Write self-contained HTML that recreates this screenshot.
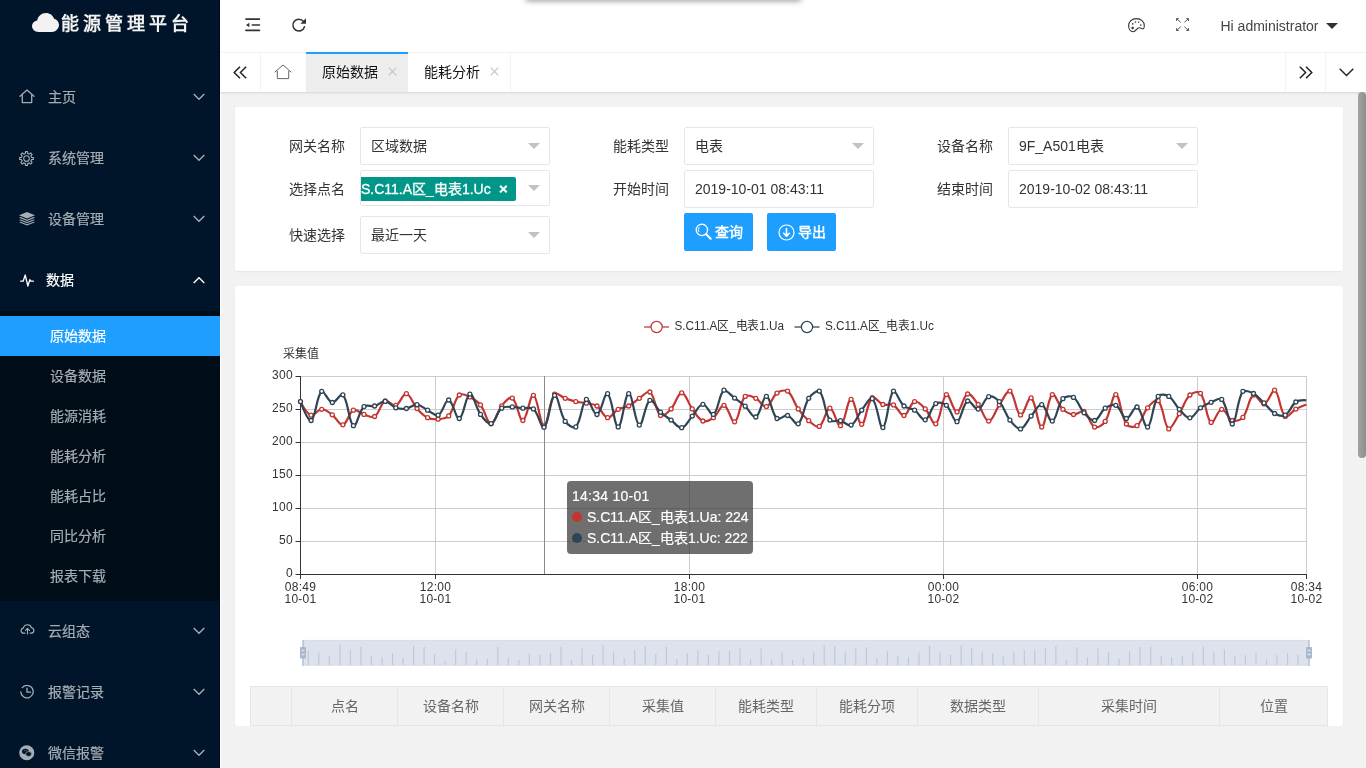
<!DOCTYPE html>
<html lang="zh-CN">
<head>
<meta charset="utf-8">
<title>能源管理平台</title>
<style>
*{box-sizing:border-box;margin:0;padding:0}
html,body{width:1366px;height:768px;overflow:hidden;background:#f2f2f2;font-family:"Liberation Sans",sans-serif;font-size:14px;color:#333}
#root{position:absolute;left:0;top:0;width:1366px;height:768px;overflow:hidden;will-change:transform}
.abs{position:absolute}
svg{display:block}
/* sidebar */
#side{position:absolute;left:0;top:0;width:220px;height:768px;background:#001529;overflow:hidden;z-index:5;box-shadow:inset -1px 0 0 rgba(0,0,20,.45)}
#logo{position:absolute;left:0;top:0;width:220px;height:50px}
#logo svg{position:absolute;left:32px;top:13px}
#logo span{position:absolute;left:61px;top:11px;line-height:26px;font-size:18px;font-weight:bold;letter-spacing:4px;color:#f2f2f2;white-space:nowrap}
.mi{position:absolute;left:0;width:220px;height:61px;color:#a6adb4}
.mi svg.ic{position:absolute;left:19px;top:23px}
.mi .t{position:absolute;left:48px;top:21px;line-height:21px;font-size:14px;white-space:nowrap;-webkit-text-stroke:.2px currentColor}
.mi svg.ar{position:absolute;left:193px;top:27px}
.mi.open{color:#fff}
#sub{position:absolute;left:0;top:311px;width:220px;height:290px;background:#000c17}
.si{position:absolute;left:0;width:220px;height:40px;line-height:40px;padding-left:50px;font-size:14px;color:#a6adb4;white-space:nowrap;-webkit-text-stroke:.2px currentColor}
.si.on{background:#1e9fff;color:#fff}
/* header */
#hd{position:absolute;left:220px;top:0;width:1146px;height:52px;background:#fff}
#hdline{position:absolute;left:220px;top:52px;width:1146px;height:1px;background:#f3f3f3;z-index:3}
#tabs{position:absolute;left:220px;top:52px;width:1146px;height:40px;background:#fff;box-shadow:0 1px 2px 0 rgba(0,0,0,.12);z-index:2}
.tb{position:absolute;top:0;height:40px;line-height:40px;font-size:14px;color:#111;white-space:nowrap}
.vl{position:absolute;top:0;width:1px;height:40px;background:#f3f3f3}
#user{position:absolute;left:1000.5px;top:15px;line-height:22px;font-size:14px;color:#444;white-space:nowrap}
/* body */
.card{position:absolute;left:235px;width:1108px;background:#fff;border-radius:2px;box-shadow:0 1px 2px 0 rgba(0,0,0,.05)}
.lb{position:absolute;width:80px;text-align:right;line-height:20px;font-size:14px;color:#333;white-space:nowrap}
.inp{position:absolute;width:190px;height:38px;border:1px solid #e6e6e6;border-radius:2px;background:#fff;padding-left:10px;line-height:36px;font-size:14px;color:#333;white-space:nowrap;overflow:hidden}
.inp i{position:absolute;right:9px;top:15px;width:0;height:0;border:6px solid transparent;border-top-color:#c2c2c2;border-bottom-width:0}
.btn{position:absolute;top:213px;width:69px;height:38px;background:#1e9fff;border-radius:2px;color:#fff;font-size:14px;line-height:38px;white-space:nowrap}
.btn svg{position:absolute;top:10px}
.btn span{position:absolute;top:0;-webkit-text-stroke:.45px #fff}
.th{position:absolute;top:0;height:38px;line-height:38px;text-align:center;font-size:14px;color:#666;border-right:1px solid #e6e6e6;white-space:nowrap}
</style>
</head>
<body>
<div id="root">
<div id="side">
  <div id="logo">
    <svg width="27" height="19" viewBox="0 0 27 20" preserveAspectRatio="none"><path fill="#f2f2f2" d="M6.6 20C2.9 20 0 17.2 0 13.8c0-3 2.2-5.5 5.2-6C5.9 3.4 9.5 0 14 0c3.8 0 7 2.5 8.100 6 2.800.7 4.900 3.300 4.900 6.400 0 4.200-3.200 7.600-7.200 7.600z"/></svg>
    <span>能源管理平台</span>
  </div>

  <div class="mi" style="top:66px">
    <svg class="ic" width="16" height="15" viewBox="0 0 16 15" fill="none" stroke="currentColor" stroke-width="1.3" stroke-linejoin="round" stroke-linecap="round"><path d="M1 7.200 8 1l7 6.200"/><path d="M3.300 6.500V13.600h9.400V6.500"/></svg>
    <span class="t">主页</span>
    <svg class="ar" width="12" height="8" viewBox="0 0 12 8" fill="none" stroke="currentColor" stroke-width="1.4"><path d="M.7 1 6 6.300 11.300 1"/></svg>
  </div>

  <div class="mi" style="top:127px">
    <svg class="ic" style="top:24px" width="15" height="15" viewBox="0 0 16 16" fill="none" stroke="currentColor" stroke-width="1.200" stroke-linejoin="round"><path d="M6.76 2.64L6.91 0.68L9.09 0.68L9.24 2.64L10.91 3.34L12.40 2.05L13.95 3.60L12.66 5.09L13.36 6.76L15.32 6.91L15.32 9.09L13.36 9.24L12.66 10.91L13.95 12.40L12.40 13.95L10.91 12.66L9.24 13.36L9.09 15.32L6.91 15.32L6.76 13.36L5.09 12.66L3.60 13.95L2.05 12.40L3.34 10.91L2.64 9.24L0.68 9.09L0.68 6.91L2.64 6.76L3.34 5.09L2.05 3.60L3.60 2.05L5.09 3.34z"/><circle cx="8" cy="8" r="3"/></svg>
    <span class="t">系统管理</span>
    <svg class="ar" width="12" height="8" viewBox="0 0 12 8" fill="none" stroke="currentColor" stroke-width="1.4"><path d="M.7 1 6 6.300 11.300 1"/></svg>
  </div>

  <div class="mi" style="top:188px">
    <svg class="ic" style="top:24px" width="16" height="13.500" viewBox="0 0 16 15" preserveAspectRatio="none" fill="currentColor"><path d="M8 0 16 3.600 8 7.200 0 3.600z"/><path d="M1.600 5.600 0 6.300l8 3.600 8-3.600-1.600-.7L8 8.500z"/><path d="M1.600 8.200 0 8.900l8 3.600 8-3.600-1.600-.7L8 11.100z"/><path d="M1.600 10.800 0 11.500l8 3.500 8-3.500-1.600-.7L8 13.700z"/></svg>
    <span class="t">设备管理</span>
    <svg class="ar" width="12" height="8" viewBox="0 0 12 8" fill="none" stroke="currentColor" stroke-width="1.4"><path d="M.7 1 6 6.300 11.300 1"/></svg>
  </div>

  <div class="mi open" style="top:249px">
    <svg class="ic" style="left:20px;top:25px" width="14" height="13" viewBox="0 0 14 13" fill="none" stroke="currentColor" stroke-width="1.300" stroke-linejoin="round" stroke-linecap="round"><path d="M.6 7.200H3.200L5.200 1l2.700 11 1.900-6.300 1 1.500h2.600"/></svg>
    <span class="t" style="left:46px">数据</span>
    <svg class="ar" width="12" height="8" viewBox="0 0 12 8" fill="none" stroke="currentColor" stroke-width="1.4"><path d="M.7 7 6 1.700 11.300 7"/></svg>
  </div>

  <div id="sub">
    <div class="si on" style="top:5px">原始数据</div>
    <div class="si" style="top:45px">设备数据</div>
    <div class="si" style="top:85px">能源消耗</div>
    <div class="si" style="top:125px">能耗分析</div>
    <div class="si" style="top:165px">能耗占比</div>
    <div class="si" style="top:205px">同比分析</div>
    <div class="si" style="top:245px">报表下载</div>
  </div>

  <div class="mi" style="top:600px">
    <svg class="ic" style="left:19.500px;top:24px" width="15" height="10.500" viewBox="0 0 16 12" fill="none" stroke="currentColor" stroke-width="1.300" stroke-linecap="round" stroke-linejoin="round"><path d="M5 10.500H3.800C2 10.500.7 9.200.7 7.600c0-1.500 1.100-2.700 2.600-2.900C3.700 2.500 5.600.8 8 .8c2.200 0 4 1.500 4.500 3.500 1.600.2 2.800 1.500 2.800 3.100 0 1.700-1.400 3.100-3.100 3.100H11"/><path d="M8 11.300V5.200M5.700 7.300 8 5l2.300 2.300"/></svg>
    <span class="t">云组态</span>
    <svg class="ar" width="12" height="8" viewBox="0 0 12 8" fill="none" stroke="currentColor" stroke-width="1.4"><path d="M.7 1 6 6.300 11.300 1"/></svg>
  </div>

  <div class="mi" style="top:661px">
    <svg class="ic" style="left:20px;top:24px" width="14" height="14" viewBox="0 0 14 14" fill="none" stroke="currentColor" stroke-width="1.300" stroke-linecap="round" stroke-linejoin="round"><path d="M2.300 2.600A6.200 6.200 0 1 1 .8 7"/><path d="M7 3.200V7.200H10.600"/></svg>
    <span class="t">报警记录</span>
    <svg class="ar" width="12" height="8" viewBox="0 0 12 8" fill="none" stroke="currentColor" stroke-width="1.4"><path d="M.7 1 6 6.300 11.300 1"/></svg>
  </div>

  <div class="mi" style="top:722px">
    <svg class="ic" style="top:23px" width="15.500" height="15.500" viewBox="0 0 16 16"><circle cx="8" cy="8" r="7.800" fill="currentColor"/><ellipse cx="6.600" cy="6.700" rx="3.500" ry="2.800" fill="#001529"/><ellipse cx="9.900" cy="9.300" rx="3.100" ry="2.500" fill="#001529" stroke="#a6adb4" stroke-width=".7"/><circle cx="5.500" cy="6" r=".5" fill="#a6adb4"/><circle cx="7.800" cy="6" r=".5" fill="#a6adb4"/></svg>
    <span class="t">微信报警</span>
    <svg class="ar" width="12" height="8" viewBox="0 0 12 8" fill="none" stroke="currentColor" stroke-width="1.4"><path d="M.7 1 6 6.300 11.300 1"/></svg>
  </div>
</div>
<div id="hd">
  <!-- fold icon -->
  <svg class="abs" style="left:25px;top:18px" width="16" height="14" viewBox="0 0 16 14"><g fill="none" stroke="#333" stroke-width="1.600" stroke-linecap="round"><path d="M.9 1.100H14.500M7.300 7H14.500M.9 12.400H14.500"/></g><path d="M1 7 4.400 4.800v4.400z" fill="#333"/></svg>
  <!-- refresh icon -->
  <svg class="abs" style="left:71px;top:17px" width="16" height="16" viewBox="0 0 16 16"><path d="M12.500 4.500A5.900 5.900 0 1 0 13.470 9.680" fill="none" stroke="#333" stroke-width="1.500" stroke-linecap="round"/><path d="M15 1.200V6.800H9.400z" fill="#333"/></svg>
  <!-- palette icon -->
  <svg class="abs" style="left:908px;top:18px" width="17" height="15" viewBox="0 0 17 15"><path d="M.6 7.800C.6 3.500 4 .6 8.400.6 12.800.6 16.300 3.600 16.300 7.400c0 1.400 0 3-.9 3.400-1.200.5-2.400-1.200-4.100-1.100-2.500.2-3.500 4-6.100 4C2.400 13.700.6 11 .6 7.800z" fill="none" stroke="#333" stroke-width="1.100"/><g fill="#333"><circle cx="7.500" cy="4" r=".8"/><circle cx="10.700" cy="4.300" r=".7"/><circle cx="4.800" cy="5.900" r=".8"/><circle cx="12.800" cy="7.100" r=".8"/><circle cx="4.600" cy="9.900" r="1.250"/></g></svg>
  <!-- fullscreen icon -->
  <svg class="abs" style="left:955.500px;top:18px" width="13.200" height="13" viewBox="0 0 14 13" preserveAspectRatio="none" fill="none" stroke="#555" stroke-width="1"><path d="M.6 3V.6H3M.6.600 5 4.400M10.900.6H13.300V3M13.300.600 8.900 4.400M.6 10.100V12.500H3M.6 12.500 5 8.700M10.900 12.500H13.300V10.100M13.300 12.500 8.900 8.700"/></svg>
  <span id="user">Hi administrator</span>
  <svg class="abs" style="left:1106px;top:23px" width="12" height="6" viewBox="0 0 12 6"><path d="M0 0H12L6 6z" fill="#333"/></svg>
</div>
<div id="tabs">
  <div class="abs" style="left:0;top:0;width:1146px;height:1px;background:#f3f3f3"></div>
  <!-- prev -->
  <svg class="abs" style="left:13px;top:14px" width="14" height="13" viewBox="0 0 14 13" fill="none" stroke="#222" stroke-width="1.500"><path d="M7 .7 1.200 6.500 7 12.300M13.200.7 7.400 6.500l5.800 5.800"/></svg>
  <div class="vl" style="left:40px"></div>
  <!-- home -->
  <svg class="abs" style="left:54px;top:12px" width="18" height="16" viewBox="0 0 18 16" fill="none" stroke="#666" stroke-width="1" stroke-linejoin="round" stroke-linecap="round"><path d="M1 8 9 1l8 7"/><path d="M3.300 7.200V14.600H14.700V7.200"/></svg>
  <div class="abs" style="left:86px;top:0;width:102px;height:40px;background:#eee;border-top:2px solid #1e9fff"></div>
  <div class="tb" style="left:102px">原始数据</div>
  <svg class="abs" style="left:168px;top:15px" width="9" height="9" viewBox="0 0 9 9" stroke="#c2c2c2" stroke-width="1.100"><path d="M.7.7 8.300 8.300M8.300.7.700 8.300"/></svg>
  <div class="tb" style="left:204px">能耗分析</div>
  <svg class="abs" style="left:270px;top:15px" width="9" height="9" viewBox="0 0 9 9" stroke="#c2c2c2" stroke-width="1.100"><path d="M.7.7 8.300 8.300M8.300.7.700 8.300"/></svg>
  <div class="vl" style="left:290px"></div>
  <div class="vl" style="left:1065px"></div>
  <!-- next -->
  <svg class="abs" style="left:1079px;top:14px" width="14" height="13" viewBox="0 0 14 13" fill="none" stroke="#222" stroke-width="1.500"><path d="M.8.700 6.600 6.500.8 12.300M7 .7l5.800 5.800L7 12.300"/></svg>
  <div class="vl" style="left:1105px"></div>
  <!-- down -->
  <svg class="abs" style="left:1119px;top:16px" width="15" height="9" viewBox="0 0 15 9" fill="none" stroke="#222" stroke-width="1.400"><path d="M.7.7 7.500 7.500 14.300.7"/></svg>
</div>
<div class="card" style="top:107px;height:164px"></div>
<div class="lb" style="left:265px;top:136px">网关名称</div>
<div class="inp" style="left:360px;top:127px">区域数据<i></i></div>
<div class="lb" style="left:589px;top:136px">能耗类型</div>
<div class="inp" style="left:684px;top:127px">电表<i></i></div>
<div class="lb" style="left:913px;top:136px">设备名称</div>
<div class="inp" style="left:1008px;top:127px">9F_A501电表<i></i></div>

<div class="lb" style="left:265px;top:179px">选择点名</div>
<div class="inp" style="left:360px;top:170px;height:36px;padding:0"><div class="abs" style="left:-22px;top:6px;width:177px;height:24px;background:#009688;border-radius:2px;color:#fff;line-height:24px;font-size:14px;padding-left:22px;-webkit-text-stroke:.3px #fff">S.C11.A区_电表1.Uc<b style="position:absolute;left:160px;top:0;font-size:15px;font-weight:bold">×</b></div><i style="top:14px"></i></div>
<div class="lb" style="left:589px;top:179px">开始时间</div>
<div class="inp" style="left:684px;top:170px">2019-10-01 08:43:11</div>
<div class="lb" style="left:913px;top:179px">结束时间</div>
<div class="inp" style="left:1008px;top:170px">2019-10-02 08:43:11</div>

<div class="lb" style="left:265px;top:225px">快速选择</div>
<div class="inp" style="left:360px;top:216px">最近一天<i></i></div>

<div class="btn" style="left:684px">
  <svg style="left:10.500px" width="17" height="17" viewBox="0 0 18 18" fill="none" stroke="#fff" stroke-width="1.400" stroke-linecap="round"><circle cx="7.300" cy="7.300" r="6"/><path d="M11.800 11.800 16.600 16.600" stroke-width="2.200"/><path d="M4 9.300A3.800 3.800 0 0 1 4.300 4.800" stroke-width="1"/></svg>
  <span style="left:31px">查询</span>
</div>
<div class="btn" style="left:767px">
  <svg style="left:10.500px;top:10.500px" width="17" height="17" viewBox="0 0 17 17" fill="none" stroke="#fff" stroke-width="1.200" stroke-linecap="round" stroke-linejoin="round"><circle cx="8.500" cy="8.500" r="7.500"/><path d="M8.500 4.600V12M5.700 9.300 8.500 12.100l2.800-2.800" stroke-width="1.600"/></svg>
  <span style="left:31px">导出</span>
</div>
<div class="card" style="top:286px;height:440px"></div>
<svg class="abs" style="left:235px;top:286px" width="1108" height="440" viewBox="235 286 1108 440" font-family="Liberation Sans, sans-serif">
<path d="M301 376.5H1306.500M301 409.5H1306.500M301 442.5H1306.500M301 475.5H1306.500M301 508.5H1306.500M301 541.5H1306.500M435.5 376V574M689.5 376V574M943.5 376V574M1197.5 376V574M1306.5 376V574" stroke="#ccc" stroke-width="1" fill="none"/>
<path d="M544.500 376V574" stroke="#8a8a8a" stroke-width="1"/>
<path d="M300.500 376V575M296 574.500H1307M295.500 376.5H301M295.500 409.5H301M295.500 442.5H301M295.500 475.5H301M295.500 508.5H301M295.500 541.5H301M295.500 574.5H301M300.5 574V579M435.5 574V579M689.5 574V579M943.5 574V579M1197.5 574V579M1306.5 574V579" stroke="#333" stroke-width="1" fill="none"/>
<g font-size="12" fill="#333">
<text x="301" y="358" text-anchor="middle">采集值</text>
<text x="293" y="378.5" text-anchor="end" letter-spacing=".3">300</text>
<text x="293" y="411.5" text-anchor="end" letter-spacing=".3">250</text>
<text x="293" y="444.5" text-anchor="end" letter-spacing=".3">200</text>
<text x="293" y="477.5" text-anchor="end" letter-spacing=".3">150</text>
<text x="293" y="510.5" text-anchor="end" letter-spacing=".3">100</text>
<text x="293" y="543.5" text-anchor="end" letter-spacing=".3">50</text>
<text x="293" y="576.5" text-anchor="end" letter-spacing=".3">0</text>
<text x="300.5" y="591.300" text-anchor="middle" letter-spacing=".25">08:49</text><text x="300.5" y="603.300" letter-spacing=".25" text-anchor="middle">10-01</text>
<text x="435.5" y="591.300" text-anchor="middle" letter-spacing=".25">12:00</text><text x="435.5" y="603.300" letter-spacing=".25" text-anchor="middle">10-01</text>
<text x="689.5" y="591.300" text-anchor="middle" letter-spacing=".25">18:00</text><text x="689.5" y="603.300" letter-spacing=".25" text-anchor="middle">10-01</text>
<text x="943.5" y="591.300" text-anchor="middle" letter-spacing=".25">00:00</text><text x="943.5" y="603.300" letter-spacing=".25" text-anchor="middle">10-02</text>
<text x="1197.5" y="591.300" text-anchor="middle" letter-spacing=".25">06:00</text><text x="1197.5" y="603.300" letter-spacing=".25" text-anchor="middle">10-02</text>
<text x="1306.5" y="591.300" text-anchor="middle" letter-spacing=".25">08:34</text><text x="1306.5" y="603.300" letter-spacing=".25" text-anchor="middle">10-02</text>
<text x="674.500" y="330" textLength="109.500" lengthAdjust="spacingAndGlyphs">S.C11.A区_电表1.Ua</text><text x="825" y="330" textLength="109" lengthAdjust="spacingAndGlyphs">S.C11.A区_电表1.Uc</text>
</g>
<g fill="#fff" stroke-width="1.250"><path d="M644 327H669" stroke="#c23531"/><circle cx="656.600" cy="327" r="5.600" stroke="#c23531"/><path d="M794.500 327H819.500" stroke="#2f4554"/><circle cx="807" cy="327" r="5.600" stroke="#2f4554"/></g>
<path d="M300.50 401.63C300.50 401.63 306.37 413.49 311.09 415.20C314.42 416.40 317.62 409.34 321.68 409.27C325.67 409.19 328.64 412.14 332.27 414.80C336.69 418.05 339.26 425.60 342.85 424.82C347.31 423.85 348.51 412.62 353.44 410.19C356.56 408.66 359.90 413.17 364.03 414.41C367.95 415.58 371.68 418.38 374.62 416.52C379.73 413.27 380.20 403.61 385.21 400.97C388.25 399.36 392.40 406.48 395.80 405.31C400.45 403.72 402.65 393.16 406.38 393.72C410.70 394.36 412.43 403.34 416.97 408.48C420.48 412.45 422.99 415.40 427.56 417.70C431.04 419.45 434.20 419.49 438.15 419.15C442.25 418.79 446.15 418.81 448.74 415.86C454.19 409.64 453.82 399.97 459.33 395.04C461.86 392.76 466.32 395.20 469.91 396.88C474.36 398.96 477.44 401.03 480.50 404.92C485.49 411.24 486.99 423.58 491.09 423.76C495.04 423.93 496.75 411.83 501.68 405.84C504.79 402.06 509.48 396.14 512.27 398.07C517.53 401.70 519.03 420.97 522.86 420.47C527.08 419.92 529.77 394.34 533.45 395.30C537.82 396.44 540.08 426.22 544.03 426.00C548.13 425.77 548.61 401.97 554.62 394.11C556.66 391.45 561.13 396.88 565.21 398.33C569.18 399.74 571.70 400.68 575.80 401.63C579.75 402.54 582.41 402.39 586.39 403.21C590.46 404.04 593.68 403.72 596.98 405.97C601.73 409.23 603.23 417.03 607.56 417.70C611.28 418.28 613.73 411.72 618.15 409.27C621.78 407.26 625.05 407.88 628.74 405.97C633.09 403.73 635.19 401.06 639.33 398.33C643.24 395.75 647.31 390.16 649.92 392.01C655.36 396.41 655.09 411.14 660.51 415.46C663.13 417.55 667.93 412.26 671.09 408.87C675.98 403.65 677.66 392.80 681.68 392.80C685.71 392.80 687.89 403.04 692.27 408.87C695.94 413.75 698.10 419.01 702.86 421.00C706.14 422.36 710.19 420.11 713.45 417.70C718.24 414.16 720.38 404.61 724.04 405.31C728.43 406.16 731.28 423.20 734.63 421.79C739.33 419.80 739.43 402.76 745.21 396.35C747.48 393.85 752.22 396.59 755.80 398.33C760.27 400.50 762.86 407.51 766.39 406.63C770.91 405.51 772.03 396.69 776.98 393.06C780.08 390.79 784.81 390.16 787.57 391.08C792.86 395.04 793.60 402.50 798.16 408.87C801.65 413.77 804.16 416.94 808.74 420.73C812.21 423.60 816.41 428.13 819.33 426.40C824.46 423.37 825.84 408.34 829.92 408.21C833.89 408.09 837.15 427.16 840.51 425.74C845.19 423.76 846.98 399.54 851.10 399.25C855.02 398.98 857.77 424.58 861.69 424.29C865.82 423.98 866.69 402.89 872.27 397.67C874.73 395.38 878.49 403.03 882.86 404.52C886.54 405.78 890.11 403.20 893.45 404.92C898.16 407.35 900.32 416.04 904.04 415.46C908.37 414.79 909.99 403.07 914.63 401.63C918.04 400.56 921.90 405.40 925.22 408.87C929.94 413.81 932.82 425.77 935.81 423.76C940.87 420.36 941.53 397.37 946.39 394.64C949.57 392.86 953.01 412.03 956.98 411.90C961.06 411.78 962.89 395.61 967.57 393.98C970.93 392.81 974.69 400.07 978.16 404.52C982.73 410.39 984.69 421.05 988.75 421.13C992.74 421.20 995.10 410.93 999.34 404.92C1003.15 399.51 1006.71 390.16 1009.92 391.08C1014.76 393.40 1015.96 413.59 1020.51 415.07C1024.01 416.20 1027.93 396.14 1031.10 397.94C1035.98 400.70 1037.86 427.65 1041.69 427.06C1045.91 426.40 1047.02 399.06 1052.28 394.64C1055.06 392.30 1058.00 404.70 1062.87 409.27C1066.05 412.26 1069.29 414.10 1073.45 414.54C1077.33 414.95 1081.07 409.75 1084.04 411.51C1089.12 414.51 1089.72 424.76 1094.63 427.06C1097.77 428.52 1102.85 425.02 1105.22 421.39C1110.90 412.70 1111.95 394.16 1115.81 394.64C1120.00 395.16 1120.41 415.23 1126.40 424.03C1128.45 427.05 1134.25 427.83 1136.99 425.74C1142.30 421.67 1142.58 413.72 1147.57 407.82C1150.63 404.20 1155.77 398.32 1158.16 400.70C1163.82 406.33 1163.76 425.83 1168.75 428.90C1171.81 428.90 1175.62 419.70 1179.34 413.75C1183.67 406.83 1184.56 400.21 1189.93 395.04C1192.61 392.45 1198.45 390.65 1200.52 393.32C1206.49 401.06 1205.90 418.52 1211.10 422.45C1213.94 424.58 1217.48 409.66 1221.69 409.27C1225.53 408.91 1227.59 418.66 1232.28 420.47C1235.63 421.76 1240.39 420.41 1242.87 417.44C1248.44 410.75 1248.29 398.35 1253.46 395.04C1256.33 393.19 1260.48 404.69 1264.05 403.87C1268.53 402.83 1271.58 390.16 1274.63 390.16C1279.63 393.11 1279.69 411.42 1285.22 416.38C1287.73 418.63 1291.58 411.51 1295.81 409.14C1299.62 407.00 1306.40 404.52 1306.40 404.52" fill="none" stroke="#c23531" stroke-width="2.200" stroke-linejoin="round"/>
<g fill="#fff" stroke="#c23531" stroke-width="1.300"><circle cx="300.5" cy="401.6" r="2"/><circle cx="311.1" cy="415.2" r="2"/><circle cx="321.7" cy="409.3" r="2"/><circle cx="332.3" cy="414.8" r="2"/><circle cx="342.9" cy="424.8" r="2"/><circle cx="353.4" cy="410.2" r="2"/><circle cx="364.0" cy="414.4" r="2"/><circle cx="374.6" cy="416.5" r="2"/><circle cx="385.2" cy="401.0" r="2"/><circle cx="395.8" cy="405.3" r="2"/><circle cx="406.4" cy="393.7" r="2"/><circle cx="417.0" cy="408.5" r="2"/><circle cx="427.6" cy="417.7" r="2"/><circle cx="438.1" cy="419.2" r="2"/><circle cx="448.7" cy="415.9" r="2"/><circle cx="459.3" cy="395.0" r="2"/><circle cx="469.9" cy="396.9" r="2"/><circle cx="480.5" cy="404.9" r="2"/><circle cx="491.1" cy="423.8" r="2"/><circle cx="501.7" cy="405.8" r="2"/><circle cx="512.3" cy="398.1" r="2"/><circle cx="522.9" cy="420.5" r="2"/><circle cx="533.4" cy="395.3" r="2"/><circle cx="544.0" cy="426.0" r="2"/><circle cx="554.6" cy="394.1" r="2"/><circle cx="565.2" cy="398.3" r="2"/><circle cx="575.8" cy="401.6" r="2"/><circle cx="586.4" cy="403.2" r="2"/><circle cx="597.0" cy="406.0" r="2"/><circle cx="607.6" cy="417.7" r="2"/><circle cx="618.2" cy="409.3" r="2"/><circle cx="628.7" cy="406.0" r="2"/><circle cx="639.3" cy="398.3" r="2"/><circle cx="649.9" cy="392.0" r="2"/><circle cx="660.5" cy="415.5" r="2"/><circle cx="671.1" cy="408.9" r="2"/><circle cx="681.7" cy="392.8" r="2"/><circle cx="692.3" cy="408.9" r="2"/><circle cx="702.9" cy="421.0" r="2"/><circle cx="713.4" cy="417.7" r="2"/><circle cx="724.0" cy="405.3" r="2"/><circle cx="734.6" cy="421.8" r="2"/><circle cx="745.2" cy="396.4" r="2"/><circle cx="755.8" cy="398.3" r="2"/><circle cx="766.4" cy="406.6" r="2"/><circle cx="777.0" cy="393.1" r="2"/><circle cx="787.6" cy="391.1" r="2"/><circle cx="798.2" cy="408.9" r="2"/><circle cx="808.7" cy="420.7" r="2"/><circle cx="819.3" cy="426.4" r="2"/><circle cx="829.9" cy="408.2" r="2"/><circle cx="840.5" cy="425.7" r="2"/><circle cx="851.1" cy="399.3" r="2"/><circle cx="861.7" cy="424.3" r="2"/><circle cx="872.3" cy="397.7" r="2"/><circle cx="882.9" cy="404.5" r="2"/><circle cx="893.5" cy="404.9" r="2"/><circle cx="904.0" cy="415.5" r="2"/><circle cx="914.6" cy="401.6" r="2"/><circle cx="925.2" cy="408.9" r="2"/><circle cx="935.8" cy="423.8" r="2"/><circle cx="946.4" cy="394.6" r="2"/><circle cx="957.0" cy="411.9" r="2"/><circle cx="967.6" cy="394.0" r="2"/><circle cx="978.2" cy="404.5" r="2"/><circle cx="988.7" cy="421.1" r="2"/><circle cx="999.3" cy="404.9" r="2"/><circle cx="1009.9" cy="391.1" r="2"/><circle cx="1020.5" cy="415.1" r="2"/><circle cx="1031.1" cy="397.9" r="2"/><circle cx="1041.7" cy="427.1" r="2"/><circle cx="1052.3" cy="394.6" r="2"/><circle cx="1062.9" cy="409.3" r="2"/><circle cx="1073.5" cy="414.5" r="2"/><circle cx="1084.0" cy="411.5" r="2"/><circle cx="1094.6" cy="427.1" r="2"/><circle cx="1105.2" cy="421.4" r="2"/><circle cx="1115.8" cy="394.6" r="2"/><circle cx="1126.4" cy="424.0" r="2"/><circle cx="1137.0" cy="425.7" r="2"/><circle cx="1147.6" cy="407.8" r="2"/><circle cx="1158.2" cy="400.7" r="2"/><circle cx="1168.8" cy="428.9" r="2"/><circle cx="1179.3" cy="413.7" r="2"/><circle cx="1189.9" cy="395.0" r="2"/><circle cx="1200.5" cy="393.3" r="2"/><circle cx="1211.1" cy="422.4" r="2"/><circle cx="1221.7" cy="409.3" r="2"/><circle cx="1232.3" cy="420.5" r="2"/><circle cx="1242.9" cy="417.4" r="2"/><circle cx="1253.5" cy="395.0" r="2"/><circle cx="1264.0" cy="403.9" r="2"/><circle cx="1274.6" cy="390.2" r="2"/><circle cx="1285.2" cy="416.4" r="2"/><circle cx="1295.8" cy="409.1" r="2"/></g>
<path d="M300.50 401.63C300.50 401.63 307.78 422.07 311.09 420.47C315.83 418.17 316.30 395.89 321.68 391.35C324.35 390.16 327.92 401.84 332.27 402.55C335.97 403.15 340.55 392.25 342.85 394.77C348.60 401.06 348.62 423.04 353.44 425.74C356.66 427.54 358.61 411.69 364.03 406.63C366.66 404.18 370.77 406.93 374.62 405.97C378.81 404.93 381.33 401.02 385.21 401.36C389.37 401.72 391.46 406.36 395.80 407.82C399.51 409.07 402.48 409.06 406.38 408.48C410.53 407.86 413.07 404.34 416.97 404.66C421.12 404.99 423.50 408.17 427.56 410.19C431.54 412.17 435.03 416.69 438.15 415.20C443.08 412.84 445.00 399.46 448.74 400.04C453.04 400.71 455.75 419.49 459.33 418.49C463.80 417.24 465.59 394.95 469.91 394.11C473.64 393.40 475.52 407.46 480.50 414.41C483.56 418.67 487.64 424.64 491.09 423.63C495.69 422.29 496.56 412.26 501.68 408.21C504.60 405.90 508.24 406.90 512.27 406.90C516.29 406.90 518.82 407.84 522.86 408.21C526.87 408.59 530.77 406.46 533.45 408.87C538.81 413.72 540.91 428.90 544.03 427.32C548.96 424.19 550.24 396.66 554.62 395.43C558.28 394.41 559.57 413.00 565.21 421.39C567.62 424.97 573.48 428.90 575.80 426.93C581.53 420.97 581.44 402.28 586.39 399.39C589.49 397.57 593.42 415.49 596.98 414.54C601.47 413.34 604.34 391.83 607.56 393.72C612.38 396.54 614.13 426.93 618.15 426.93C622.18 426.93 624.61 394.08 628.74 393.72C632.66 393.38 634.89 423.70 639.33 425.08C642.94 426.20 644.86 403.39 649.92 400.31C652.90 398.49 656.11 408.07 660.51 412.17C664.16 415.58 667.05 417.10 671.09 420.07C675.09 423.01 678.03 428.40 681.68 427.72C686.08 426.90 688.27 420.55 692.27 416.12C696.32 411.64 698.67 404.60 702.86 404.26C706.72 403.95 710.58 416.32 713.45 414.41C718.63 410.96 718.67 394.30 724.04 390.16C726.72 390.16 730.63 395.03 734.63 398.07C738.67 401.14 741.44 402.85 745.21 406.24C749.48 410.06 752.63 418.52 755.80 417.04C760.68 414.77 762.48 396.09 766.39 396.35C770.52 396.64 771.42 413.48 776.98 418.49C779.47 420.74 783.95 414.56 787.57 415.46C791.99 416.56 795.52 425.90 798.16 423.76C803.56 419.39 803.25 406.80 808.74 398.33C811.30 394.38 816.97 390.16 819.33 391.08C825.02 396.92 823.93 411.69 829.92 420.07C831.98 422.96 836.64 419.82 840.51 420.73C844.69 421.72 848.00 426.62 851.10 425.08C856.05 422.62 857.35 415.59 861.69 410.19C865.39 405.58 869.56 396.50 872.27 398.73C877.61 403.11 879.26 428.88 882.86 427.58C887.31 425.98 888.02 396.63 893.45 391.08C896.06 390.16 899.08 401.50 904.04 405.97C907.13 408.76 911.06 407.86 914.63 410.19C919.11 413.12 921.80 420.87 925.22 419.81C929.84 418.37 930.63 407.15 935.81 403.60C938.67 401.64 943.54 402.88 946.39 405.31C951.58 409.74 953.31 422.41 956.98 421.65C961.36 420.76 962.46 403.99 967.57 400.97C970.51 399.23 974.53 409.86 978.16 409.14C982.58 408.26 984.06 398.41 988.75 396.75C992.10 395.56 996.49 398.49 999.34 401.63C1004.53 407.35 1005.04 413.78 1009.92 420.07C1013.09 424.15 1016.86 428.90 1020.51 428.90C1024.91 428.08 1026.95 420.87 1031.10 416.12C1035.00 411.66 1038.12 403.81 1041.69 404.66C1046.17 405.71 1048.73 422.12 1052.28 421.13C1056.77 419.87 1057.24 405.03 1062.87 398.73C1065.29 396.01 1070.53 395.46 1073.45 397.41C1078.58 400.82 1079.30 407.67 1084.04 412.83C1087.35 416.43 1091.04 421.25 1094.63 420.47C1099.09 419.50 1100.42 411.65 1105.22 408.21C1108.47 405.89 1112.64 403.78 1115.81 405.31C1120.69 407.68 1122.21 418.15 1126.40 418.49C1130.26 418.80 1133.70 405.70 1136.99 407.03C1141.75 408.96 1144.27 428.72 1147.57 427.06C1152.31 424.67 1152.09 405.15 1158.16 396.35C1160.14 393.49 1165.63 394.45 1168.75 396.35C1173.68 399.36 1174.91 404.77 1179.34 409.27C1182.95 412.93 1186.04 418.10 1189.93 417.83C1194.09 417.55 1196.09 411.07 1200.52 407.82C1204.14 405.16 1206.91 403.95 1211.10 402.28C1214.96 400.75 1219.36 396.99 1221.69 399.39C1227.40 405.25 1228.75 425.37 1232.28 424.03C1236.80 422.31 1236.75 400.19 1242.87 391.35C1244.79 390.16 1249.98 391.55 1253.46 393.46C1258.03 395.96 1260.12 399.23 1264.05 402.94C1268.17 406.84 1269.95 410.77 1274.63 413.48C1278.00 415.43 1282.10 416.89 1285.22 415.20C1290.15 412.53 1290.89 405.48 1295.81 402.02C1298.94 399.82 1306.40 400.31 1306.40 400.31" fill="none" stroke="#2f4554" stroke-width="2.200" stroke-linejoin="round"/>
<g fill="#fff" stroke="#2f4554" stroke-width="1.300"><circle cx="300.5" cy="401.6" r="2"/><circle cx="311.1" cy="420.5" r="2"/><circle cx="321.7" cy="391.3" r="2"/><circle cx="332.3" cy="402.5" r="2"/><circle cx="342.9" cy="394.8" r="2"/><circle cx="353.4" cy="425.7" r="2"/><circle cx="364.0" cy="406.6" r="2"/><circle cx="374.6" cy="406.0" r="2"/><circle cx="385.2" cy="401.4" r="2"/><circle cx="395.8" cy="407.8" r="2"/><circle cx="406.4" cy="408.5" r="2"/><circle cx="417.0" cy="404.7" r="2"/><circle cx="427.6" cy="410.2" r="2"/><circle cx="438.1" cy="415.2" r="2"/><circle cx="448.7" cy="400.0" r="2"/><circle cx="459.3" cy="418.5" r="2"/><circle cx="469.9" cy="394.1" r="2"/><circle cx="480.5" cy="414.4" r="2"/><circle cx="491.1" cy="423.6" r="2"/><circle cx="501.7" cy="408.2" r="2"/><circle cx="512.3" cy="406.9" r="2"/><circle cx="522.9" cy="408.2" r="2"/><circle cx="533.4" cy="408.9" r="2"/><circle cx="544.0" cy="427.3" r="2"/><circle cx="554.6" cy="395.4" r="2"/><circle cx="565.2" cy="421.4" r="2"/><circle cx="575.8" cy="426.9" r="2"/><circle cx="586.4" cy="399.4" r="2"/><circle cx="597.0" cy="414.5" r="2"/><circle cx="607.6" cy="393.7" r="2"/><circle cx="618.2" cy="426.9" r="2"/><circle cx="628.7" cy="393.7" r="2"/><circle cx="639.3" cy="425.1" r="2"/><circle cx="649.9" cy="400.3" r="2"/><circle cx="660.5" cy="412.2" r="2"/><circle cx="671.1" cy="420.1" r="2"/><circle cx="681.7" cy="427.7" r="2"/><circle cx="692.3" cy="416.1" r="2"/><circle cx="702.9" cy="404.3" r="2"/><circle cx="713.4" cy="414.4" r="2"/><circle cx="724.0" cy="390.2" r="2"/><circle cx="734.6" cy="398.1" r="2"/><circle cx="745.2" cy="406.2" r="2"/><circle cx="755.8" cy="417.0" r="2"/><circle cx="766.4" cy="396.4" r="2"/><circle cx="777.0" cy="418.5" r="2"/><circle cx="787.6" cy="415.5" r="2"/><circle cx="798.2" cy="423.8" r="2"/><circle cx="808.7" cy="398.3" r="2"/><circle cx="819.3" cy="391.1" r="2"/><circle cx="829.9" cy="420.1" r="2"/><circle cx="840.5" cy="420.7" r="2"/><circle cx="851.1" cy="425.1" r="2"/><circle cx="861.7" cy="410.2" r="2"/><circle cx="872.3" cy="398.7" r="2"/><circle cx="882.9" cy="427.6" r="2"/><circle cx="893.5" cy="391.1" r="2"/><circle cx="904.0" cy="406.0" r="2"/><circle cx="914.6" cy="410.2" r="2"/><circle cx="925.2" cy="419.8" r="2"/><circle cx="935.8" cy="403.6" r="2"/><circle cx="946.4" cy="405.3" r="2"/><circle cx="957.0" cy="421.7" r="2"/><circle cx="967.6" cy="401.0" r="2"/><circle cx="978.2" cy="409.1" r="2"/><circle cx="988.7" cy="396.7" r="2"/><circle cx="999.3" cy="401.6" r="2"/><circle cx="1009.9" cy="420.1" r="2"/><circle cx="1020.5" cy="428.9" r="2"/><circle cx="1031.1" cy="416.1" r="2"/><circle cx="1041.7" cy="404.7" r="2"/><circle cx="1052.3" cy="421.1" r="2"/><circle cx="1062.9" cy="398.7" r="2"/><circle cx="1073.5" cy="397.4" r="2"/><circle cx="1084.0" cy="412.8" r="2"/><circle cx="1094.6" cy="420.5" r="2"/><circle cx="1105.2" cy="408.2" r="2"/><circle cx="1115.8" cy="405.3" r="2"/><circle cx="1126.4" cy="418.5" r="2"/><circle cx="1137.0" cy="407.0" r="2"/><circle cx="1147.6" cy="427.1" r="2"/><circle cx="1158.2" cy="396.4" r="2"/><circle cx="1168.8" cy="396.4" r="2"/><circle cx="1179.3" cy="409.3" r="2"/><circle cx="1189.9" cy="417.8" r="2"/><circle cx="1200.5" cy="407.8" r="2"/><circle cx="1211.1" cy="402.3" r="2"/><circle cx="1221.7" cy="399.4" r="2"/><circle cx="1232.3" cy="424.0" r="2"/><circle cx="1242.9" cy="391.3" r="2"/><circle cx="1253.5" cy="393.5" r="2"/><circle cx="1264.0" cy="402.9" r="2"/><circle cx="1274.6" cy="413.5" r="2"/><circle cx="1285.2" cy="415.2" r="2"/><circle cx="1295.8" cy="402.0" r="2"/></g>
<rect x="303" y="640" width="1006" height="25.500" fill="#dde2ec"/>
<path d="M303 640.400H1309M303 665.200H1309" stroke="#d6dbe6" stroke-width=".8"/>
<path d="M308.3 650.8V665M318.8 652.4V665M329.3 655.7V665M339.9 644.8V665M350.4 650.2V665M360.9 646.8V665M371.4 656.1V665M382.0 657.3V665M392.5 652.9V665M403.0 658.1V665M413.6 645.8V665M424.1 646.8V665M434.6 654.3V665M445.2 661.1V665M455.7 649.2V665M466.2 652.0V665M476.7 659.3V665M487.3 659.1V665M497.8 646.8V665M508.3 657.9V665M518.9 660.1V665M529.4 653.7V665M539.9 654.9V665M550.5 652.9V665M561.0 646.8V665M571.5 660.1V665M582.0 648.2V665M592.6 655.1V665M603.1 645.2V665M613.6 651.2V665M624.2 657.9V665M634.7 650.6V665M645.2 646.2V665M655.8 653.7V665M666.3 646.8V665M676.8 659.1V665M687.3 652.9V665M697.9 650.2V665M708.4 655.1V665M718.9 651.0V665M729.5 650.8V665M740.0 648.2V665M750.5 659.3V665M761.1 648.6V665M771.6 659.7V665M782.1 652.2V665M792.6 660.1V665M803.2 657.7V665M813.7 652.2V665M824.2 645.2V665M834.8 646.2V665M845.3 651.4V665M855.8 648.2V665M866.4 647.2V665M876.9 657.9V665M887.4 651.2V665M897.9 656.1V665M908.5 657.3V665M919.0 652.4V665M929.5 645.8V665M940.1 652.6V665M950.6 655.1V665M961.1 645.4V665M971.7 648.2V665M982.2 651.4V665M992.7 653.1V665M1003.2 656.1V665M1013.8 651.2V665M1024.3 650.2V665M1034.8 649.2V665M1045.4 648.2V665M1055.9 646.2V665M1066.4 660.1V665M1077.0 647.2V665M1087.5 657.3V665M1098.0 648.2V665M1108.5 652.0V665M1119.1 659.1V665M1129.6 651.2V665M1140.1 647.2V665M1150.7 646.8V665M1161.2 655.7V665M1171.7 657.1V665M1182.3 656.1V665M1192.8 652.4V665M1203.3 646.2V665M1213.8 651.2V665M1224.4 649.2V665M1234.9 656.1V665M1245.4 655.1V665M1256.0 653.1V665M1266.5 659.3V665M1277.0 655.1V665M1287.6 653.1V665M1298.1 655.1V665" stroke="#bfc6d8" stroke-width="1.100" fill="none"/>
<path d="M303 640V666M1309 640V666" stroke="#a7b7cc" stroke-width="1.200"/>
<rect x="300.0" y="647" width="6" height="11.500" rx="1" fill="#a7b7cc"/><path d="M301.5 650.500h3M301.5 654.500h3" stroke="#dde2ec" stroke-width="1.600"/>
<rect x="1306.0" y="647" width="6" height="11.500" rx="1" fill="#a7b7cc"/><path d="M1307.5 650.500h3M1307.5 654.500h3" stroke="#dde2ec" stroke-width="1.600"/>
</svg>
<!-- tooltip -->
<div class="abs" style="left:567px;top:481px;width:186px;height:73px;background:rgba(50,50,50,.7);border-radius:4px;color:#fff;font-size:14px;line-height:21px;padding:5px;white-space:nowrap;overflow:hidden;-webkit-text-stroke:.2px #fff">
  <div style="letter-spacing:.25px">14:34 10-01</div>
  <div><i style="display:inline-block;width:10px;height:10px;border-radius:5px;background:#c23531;margin-right:5px"></i>S.C11.A区_电表1.Ua: 224</div>
  <div><i style="display:inline-block;width:10px;height:10px;border-radius:5px;background:#2f4554;margin-right:5px"></i>S.C11.A区_电表1.Uc: 222</div>
</div>
<!-- table header -->
<div class="abs" style="left:250px;top:686px;width:1078px;height:40px;background:#f2f2f2;border:1px solid #e6e6e6;overflow:hidden">
  <div class="th" style="left:0;width:41px"></div>
  <div class="th" style="left:41px;width:106px">点名</div>
  <div class="th" style="left:147px;width:106px">设备名称</div>
  <div class="th" style="left:253px;width:106px">网关名称</div>
  <div class="th" style="left:359px;width:106px">采集值</div>
  <div class="th" style="left:465px;width:101px">能耗类型</div>
  <div class="th" style="left:566px;width:101px">能耗分项</div>
  <div class="th" style="left:667px;width:121px">数据类型</div>
  <div class="th" style="left:788px;width:181px">采集时间</div>
  <div class="th" style="left:969px;width:108px;border-right:0">位置</div>
</div>
<!-- page bottom mask -->
<div class="abs" style="left:220px;top:726px;width:1146px;height:42px;background:#f2f2f2"></div>
<!-- white edge line -->
<div class="abs" style="left:220px;top:92px;width:1px;height:676px;background:#fff;z-index:1"></div>
<!-- scrollbar thumb -->
<div class="abs" style="left:1358px;top:92px;width:8px;height:366px;border-radius:4px 0 0 4px/4px 0 0 4px;background:linear-gradient(90deg,#a3a3a3,#8e8e8e);border-top-left-radius:4px;border-top-right-radius:4px;border-bottom-left-radius:4px;border-bottom-right-radius:4px;z-index:4"></div>
<!-- fullscreen hint shadow at top -->
<div class="abs" style="left:527px;top:-20px;width:273px;height:20px;background:#fff;box-shadow:0 0 6px 1px rgba(0,0,0,.4);z-index:9"></div>
</div><!-- /root -->
</body>
</html>
